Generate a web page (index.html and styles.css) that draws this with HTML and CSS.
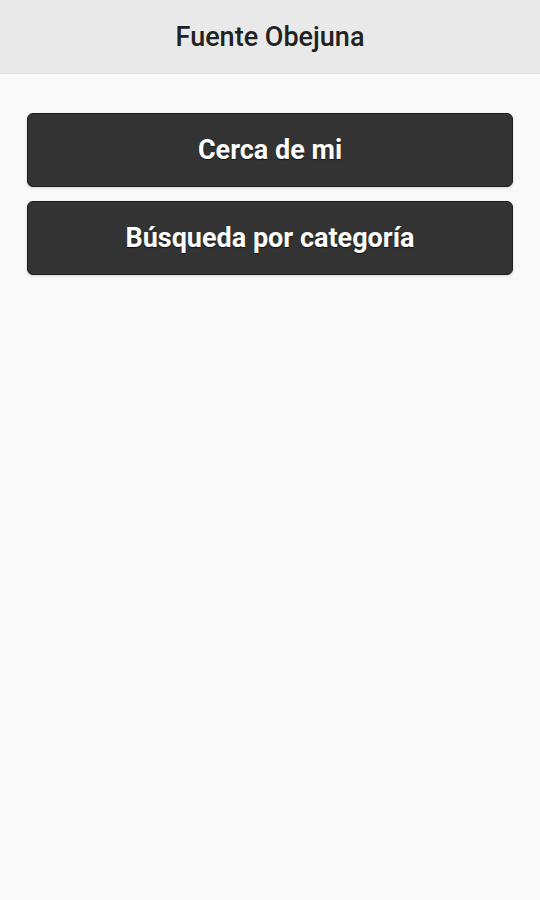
FILE: index.html
```html
<!DOCTYPE html>
<html lang="es">
<head>
  <meta charset="UTF-8">
  <title>Fuente Obejuna</title>
  <link rel="stylesheet" href="styles.css">
</head>
<body>
  <div class="header">
    <h1>Fuente Obejuna</h1>
  </div>

  <div class="content">
    <a href="#" class="btn">Cerca de mi</a>
    <a href="#" class="btn">Búsqueda por categoría</a>
  </div>
</body>
</html>
```

FILE: styles.css
```css
html, body {
  margin: 0;
  padding: 0;
  height: 100%;
}
body {
  font-family: Roboto, "Liberation Sans", sans-serif;
  background-color: #f9f9f9;
}
.header {
  height: 73px;
  background-color: #e9e9e9;
  border-bottom: 1px solid #dedede;
  display: flex;
  align-items: center;
  justify-content: center;
}
.header h1 {
  margin: 0;
  font-size: 27px;
  font-weight: 500;
  color: #222;
}
.content {
  padding: 39px 27px;
  display: flex;
  flex-direction: column;
  gap: 14px;
}
.btn {
  display: flex;
  align-items: center;
  justify-content: center;
  height: 72px;
  background-color: #333;
  border: 1px solid #1f1f1f;
  border-radius: 6px;
  color: #fff;
  font-size: 27px;
  font-weight: 700;
  text-decoration: none;
  text-shadow: 0 1px 1px #111;
  box-shadow: 0 1px 3px rgba(0, 0, 0, 0.15);
}
```
